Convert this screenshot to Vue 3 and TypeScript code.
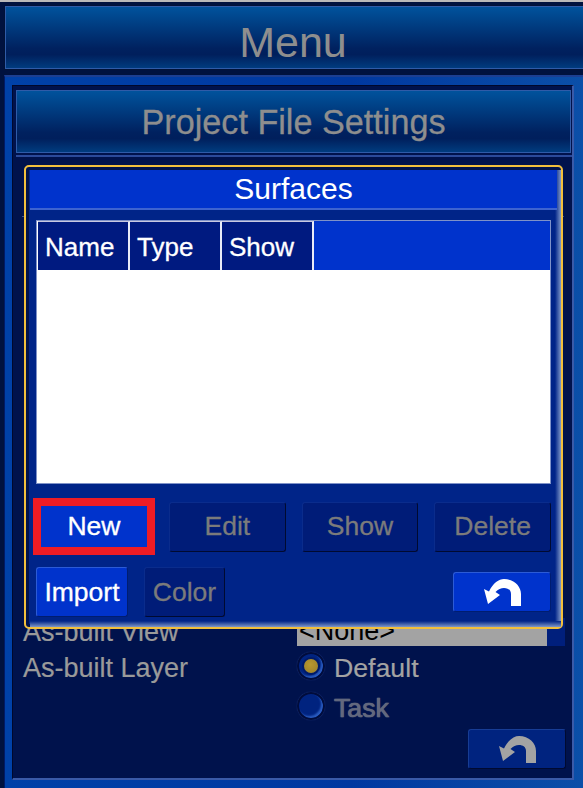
<script setup lang="ts">
const cols: string[] = ['Name', 'Type', 'Show']
const backPath = 'M37 27 H27 V15 C27 11 24 9 20 9 C17 9 14 10.5 11.5 13 L16 16 L4 25 L0 10 L5 12.5 C9 4 15 0 20 0 C30 0 37 7 37 15 Z'
</script>

<template>
  <div class="screen">
    <header class="bar top"><h1>Menu</h1></header>
    <main class="outer">
      <div class="inner">
        <div class="bar sub"><h2>Project File Settings</h2></div>
        <section class="content">
          <div class="rule"></div>
          <div class="behind">
            <div class="row">
              <span class="label">As-built View</span>
              <div class="select"><span class="value">&lt;None&gt;</span><span class="arrow"></span></div>
            </div>
            <div class="row">
              <span class="label">As-built Layer</span>
              <div class="radios">
                <div class="radio-row"><span class="radio on"></span><span class="opt">Default</span></div>
                <div class="radio-row"><span class="radio"></span><span class="opt dim">Task</span></div>
              </div>
            </div>
          </div>
          <div class="back-row">
            <button class="back muted">
              <svg width="37" height="27" viewBox="0 0 37 27"><path :d="backPath" fill="#a3a3a3" /></svg>
            </button>
          </div>
        </section>
      </div>
    </main>

    <div class="modal">
      <div class="title">Surfaces</div>
      <div class="body">
        <div class="table">
          <div class="thead">
            <div v-for="c in cols" :key="c" class="th">{{ c }}</div>
          </div>
          <div class="tbody"></div>
        </div>
        <div class="actions">
          <button class="btn primary new">New</button>
          <button class="btn off">Edit</button>
          <button class="btn off">Show</button>
          <button class="btn off">Delete</button>
        </div>
        <div class="actions2">
          <button class="btn primary import">Import</button>
          <button class="btn off color">Color</button>
          <button class="back bright">
            <svg width="37" height="27" viewBox="0 0 37 27"><path :d="backPath" fill="#fff" /></svg>
          </button>
        </div>
      </div>
    </div>
  </div>
</template>

<style>
html, body { margin: 0; background: #000b3c; }
</style>

<style scoped>
.screen {
  position: relative;
  width: 583px;
  height: 788px;
  overflow: hidden;
  box-sizing: border-box;
  padding-top: 4px;
  border-top: 2px solid #b9b9b9;
  background: #00123f;
  font-family: "Liberation Sans", Arial, sans-serif;
  display: flex;
  flex-direction: column;
}
button { font-family: inherit; padding: 0; }
h1, h2 { margin: 0; font-weight: 400; color: #8e8e8e; }
.bar {
  display: flex;
  align-items: center;
  justify-content: center;
  box-sizing: border-box;
  border: 1px solid #2f5ba8;
  background: linear-gradient(#00529c 0%, #004a92 12%, #00215f 68%, #001f5c 78%, #003c7f 100%);
}
.top {
  height: 63px;
  margin: 0 0 0 5px;
  padding: 9px 3px 0 0;
  border-right: 0;
  outline: 1px solid #001238;
  flex: none;
}
h1 { font-size: 43px; line-height: 1; }
.outer {
  flex: 1;
  margin: 6px 0 0 4px;
  box-sizing: border-box;
  padding: 8px 9px 8px 7px;
  border-top: 2px solid #1c3f92;
  border-left: 1px solid #001a66;
  display: flex;
  flex-direction: column;
  min-height: 0;
  background: linear-gradient(90deg, #0041a8, #0038a0 60%, #0b4fa8);
}
.inner {
  flex: 1;
  box-sizing: border-box;
  background: #00124c;
  border: 1px solid #00082c;
  border-bottom: 2px solid #3a5aa8;
  border-right: 2px solid #3a5aa8;
  padding: 4px 0 0 3px;
  display: flex;
  flex-direction: column;
}
.sub {
  height: 63px;
  padding-top: 1px;
  flex: none;
  margin-right: 1px;
}
h2 { font-size: 34.2px; line-height: 1; -webkit-text-stroke: 0.3px #8e8e8e; }
.content {
  flex: 1;
  display: flex;
  flex-direction: column;
  margin-top: 2px;
  border-top: 2px solid #2b4a9a;
  padding: 0 6px 9px 7px;
}
.rule { height: 1px; margin: 59px 2px 0 -1px; background: #3d5590; }
.behind { display: flex; flex-direction: column; margin-top: auto; }
.row { display: flex; }
.label {
  width: 274px;
  color: #9a9a9a;
  font-size: 27px;
  line-height: 28px;
  flex: none;
  -webkit-text-stroke: 0.2px #9a9a9a;
}
.select {
  width: 268px;
  height: 28px;
  display: flex;
  background: #a3a3a3;
  color: #000;
  font-size: 27px;
  line-height: 26px;
}
.value { flex: 1; padding-left: 2px; }
.arrow { width: 18px; background: #001f7c; }
.row + .row { margin-top: 8px; }
.radios { display: flex; flex-direction: column; gap: 12px; margin-top: -2px; }
.radio-row { display: flex; align-items: center; gap: 9px; height: 28px; }
.radio {
  box-sizing: border-box;
  width: 28px;
  height: 28px;
  border-radius: 50%;
  background: #00237f;
  border: 2px solid #000c3c;
  box-shadow: inset -2px -2px 2px #2a5cc0, 0 0 1px #2b4a9a;
  display: flex;
  align-items: center;
  justify-content: center;
}
.radio.on::after {
  content: "";
  width: 14px;
  height: 14px;
  border-radius: 50%;
  background: radial-gradient(circle at 45% 40%, #b8982f, #9a7f2a);
  box-shadow: 0 0 0 2px #001a68;
}
.opt { padding-top: 3px; font-size: 26.7px; color: #a3a3a3; line-height: 28px; -webkit-text-stroke: 0.2px #a3a3a3; }
.opt.dim { color: #62687e; text-shadow: 0 0 1px #8c8c8c; -webkit-text-stroke: 0.5px #62687e; }
.back-row { display: flex; justify-content: flex-end; margin-top: 9px; height: 40px; }
.back {
  width: 98px;
  height: 40px;
  box-sizing: border-box;
  border-radius: 3px;
  display: flex;
  align-items: center;
  justify-content: center;
}
.back.muted { background: #00237f; border: 1px solid #173c94; border-right-color: #000a30; border-bottom-color: #000a30; }
.back.bright { background: #0033cc; border: 1px solid #2c5bd6; border-right-color: #001d70; border-bottom-color: #001d70; }

.modal {
  position: absolute;
  left: 24px;
  top: 163px;
  width: 539px;
  height: 464px;
  box-sizing: border-box;
  border: 2px solid #f2bf3c;
  border-radius: 5px;
  background: #002488;
  padding: 3px 4px 0 4px;
  display: flex;
  flex-direction: column;
  box-shadow: inset 0 0 0 3px #00124c;
}
.modal::before {
  content: "";
  position: absolute;
  top: 3px;
  right: 0;
  bottom: 0;
  width: 6px;
  background: linear-gradient(90deg, #002488, #7f97c8);
  pointer-events: none;
}
.modal::after {
  content: "";
  position: absolute;
  left: 4px;
  right: 0;
  bottom: 0;
  height: 6px;
  background: linear-gradient(#002488, #7f97c8);
  pointer-events: none;
}
.title {
  height: 40px;
  flex: none;
  box-sizing: border-box;
  background: #0033cc;
  border-bottom: 2px solid #3d63d0;
  color: #fff;
  text-align: center;
  font-size: 30px;
  line-height: 38px;
  position: relative;
  z-index: 1;
}
.body {
  flex: 1;
  padding: 10px 6px 0 6px;
  display: flex;
  flex-direction: column;
}
.table {
  height: 264px;
  flex: none;
  box-sizing: border-box;
  border: 1px solid #7f92c8;
  padding: 0 0 1px 1px;
  background: #fff;
  display: flex;
  flex-direction: column;
}
.thead { display: flex; height: 49px; background: #0033cc; flex: none; margin-right: 0; }
.th {
  box-sizing: border-box;
  width: 92px;
  background: #001a80;
  color: #fff;
  font-size: 26px;
  line-height: 50px;
  padding-left: 7px;
  border-top: 1px solid #c8c8e0;
  border-right: 2px solid #e8ecf8;
  -webkit-text-stroke: 0.3px #fff;
}
.tbody { flex: 1; background: #fff; }
.actions {
  margin-top: 14px;
  display: flex;
  align-items: center;
  gap: 16px;
}
.btn {
  box-sizing: border-box;
  height: 50px;
  font-size: 26.5px;
  border-radius: 3px;
  text-align: center;
}
.primary { background: #0033cc; color: #fff; border: 1px solid #2c5bd6; border-right-color: #001d70; border-bottom-color: #001d70; -webkit-text-stroke: 0.3px #fff; }
.off { background: #001c78; color: #7b7b7b; border: 1px solid #0a2c8c; border-right-color: #000a30; border-bottom-color: #000a30; width: 116.67px; -webkit-text-stroke: 0.3px #7b7b7b; }
.new {
  width: 122px;
  height: 57px;
  margin-left: -3px;
  margin-right: -2px;
  border: 8px solid #ee1c25;
  border-radius: 0;
}
.actions2 {
  margin-top: 12px;
  display: flex;
  align-items: flex-start;
  gap: 16px;
}
.import { width: 92px; }
.btn.color { width: 81px; }
.actions2 .back { margin-left: auto; margin-top: 5px; }
</style>
